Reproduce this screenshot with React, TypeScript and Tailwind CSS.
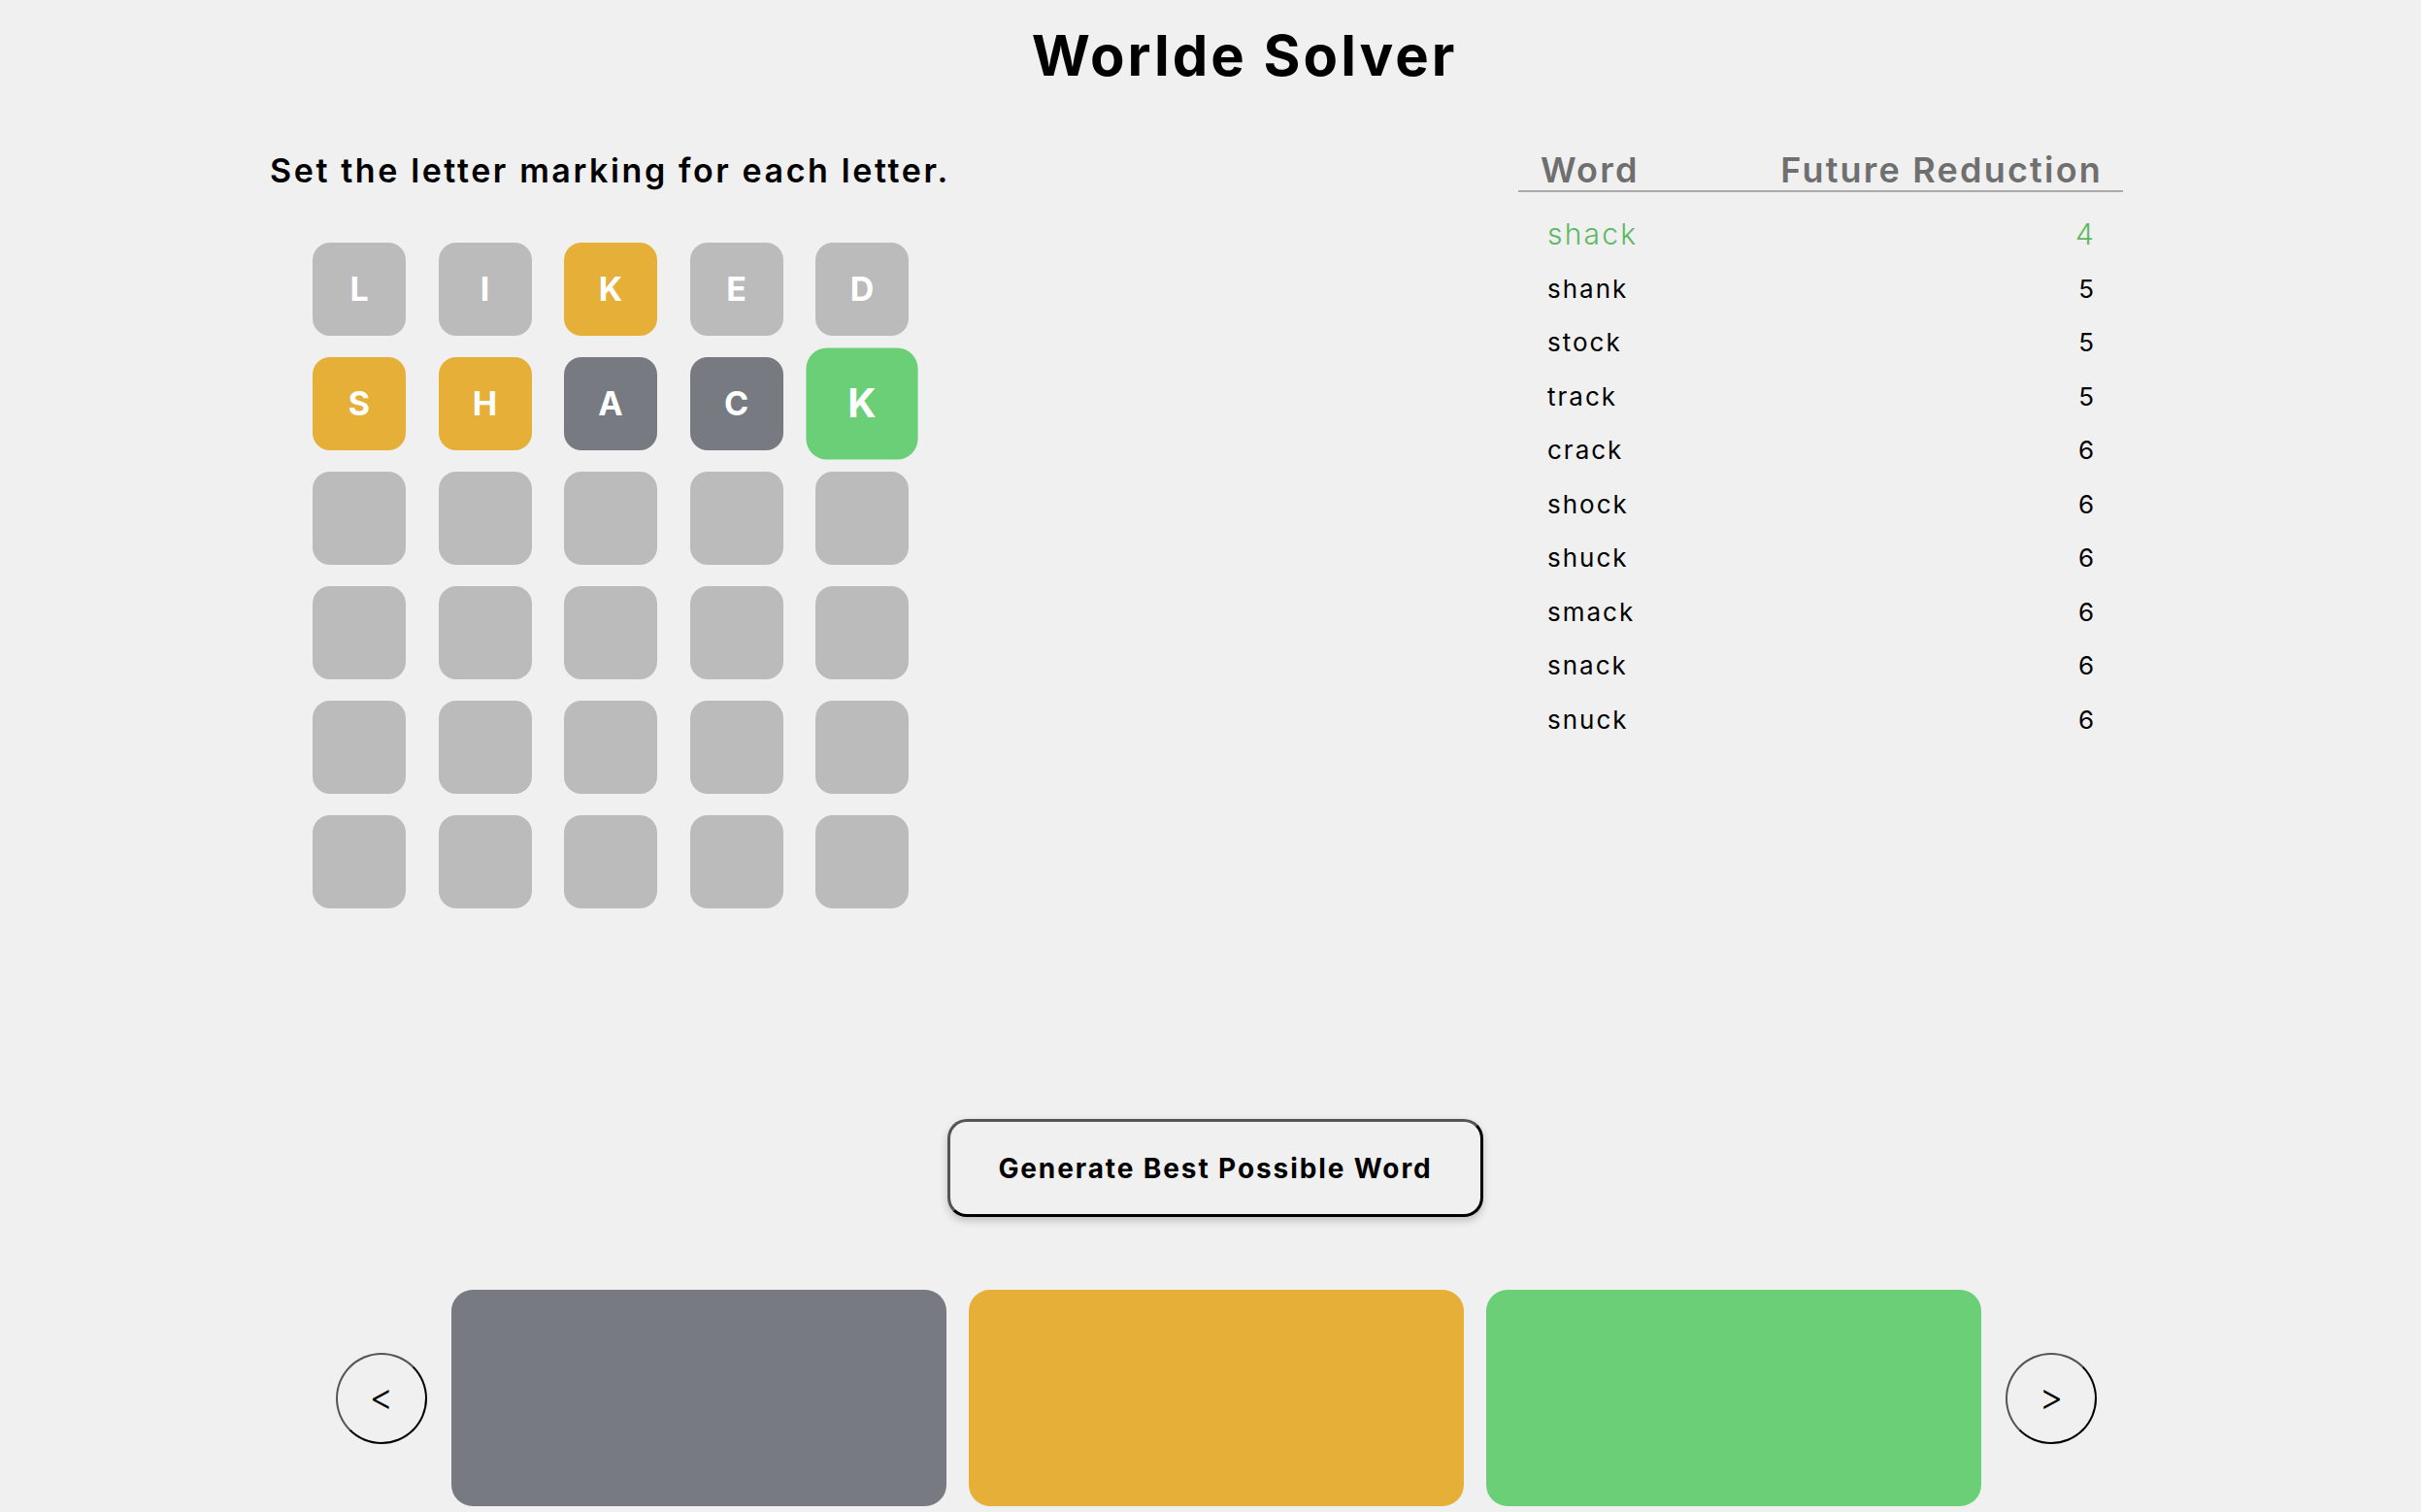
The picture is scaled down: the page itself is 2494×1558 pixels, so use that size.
type Mark = "none" | "absent" | "present" | "correct";

const rows: { letter: string; mark: Mark }[][] = [
  [
    { letter: "L", mark: "none" },
    { letter: "I", mark: "none" },
    { letter: "K", mark: "present" },
    { letter: "E", mark: "none" },
    { letter: "D", mark: "none" },
  ],
  [
    { letter: "S", mark: "present" },
    { letter: "H", mark: "present" },
    { letter: "A", mark: "absent" },
    { letter: "C", mark: "absent" },
    { letter: "K", mark: "correct" },
  ],
];

const emptyRows = 4;

const words: [string, number][] = [
  ["shack", 4],
  ["shank", 5],
  ["stock", 5],
  ["track", 5],
  ["crack", 6],
  ["shock", 6],
  ["shuck", 6],
  ["smack", 6],
  ["snack", 6],
  ["snuck", 6],
];

const markClass: Record<Mark, string> = {
  none: "bg-[#bbbbbb]",
  absent: "bg-[#787a81]",
  present: "bg-[#e6b038]",
  correct: "bg-[#6acf76] scale-[1.2]",
};

function Tile({ letter, mark }: { letter?: string; mark: Mark }) {
  return (
    <div
      className={`flex h-[96px] w-[96px] items-center justify-center rounded-[18px] text-[34px] font-bold leading-none text-white ${markClass[mark]}`}
    >
      {letter}
    </div>
  );
}

function ArrowButton({ label }: { label: string }) {
  return (
    <button className="flex h-[94px] w-[94px] items-center justify-center rounded-full border-2 border-black bg-transparent pb-[3px] text-[38px] font-light leading-none text-black [border-style:outset]">
      {label}
    </button>
  );
}

export default function App() {
  return (
    <div className="min-h-screen bg-[#f0f0f0] font-['Inter',sans-serif] text-black">
      <h1 className="pl-[70px] pt-[28px] text-center text-[58px] font-bold leading-none tracking-[3px]">
        Worlde Solver
      </h1>

      <div className="mt-[71px] flex items-start pl-[278px]">
        <div className="w-[1286px]">
          <p className="mt-[2px] text-[34px] font-semibold leading-none tracking-[2.6px]">
            Set the letter marking for each letter.
          </p>
          <div className="ml-[44px] mt-[57px] grid grid-cols-[repeat(5,96px)] gap-x-[33.5px] gap-y-[22px]">
            {rows.map((row, r) =>
              row.map((cell, c) => (
                <Tile key={`${r}-${c}`} letter={cell.letter} mark={cell.mark} />
              ))
            )}
            {Array.from({ length: emptyRows * 5 }).map((_, i) => (
              <Tile key={`empty-${i}`} mark="none" />
            ))}
          </div>
        </div>

        <div className="w-[623px]">
          <div className="flex justify-between border-b-2 border-[#aaaaaa] pb-[3px] pl-[23px] pr-[21px] text-[36px] font-semibold leading-none tracking-[2.2px] text-[#6f6f6f]">
            <span>Word</span>
            <span>Future Reduction</span>
          </div>
          <div className="mt-[16px]">
            {words.map(([word, score], i) => (
              <div
                key={word}
                className={`flex h-[55.5px] justify-between pl-[30px] pr-[28px] leading-[55.5px] ${
                  i === 0
                    ? "text-[30px] font-light tracking-[2.2px] text-[#5cb860]"
                    : "text-[26px] font-normal tracking-[2px] text-black"
                }`}
              >
                <span>{word}</span>
                <span>{score}</span>
              </div>
            ))}
          </div>
        </div>
      </div>

      <div className="mt-[217px] flex justify-center pl-[10px]">
        <button className="h-[101px] w-[552px] rounded-[20px] border-[3px] border-black bg-[#f0f0f0] text-[28px] font-bold tracking-[1.9px] text-black shadow-[0_4px_8px_rgba(0,0,0,0.2)] [border-style:outset]">
          Generate Best Possible Word
        </button>
      </div>

      <div className="mt-[75px] flex items-center justify-center gap-[25px] pl-[12px]">
        <ArrowButton label="<" />
        <div className="flex gap-[23px]">
          <div className="h-[223px] w-[510px] rounded-[22px] bg-[#787a81]" />
          <div className="h-[223px] w-[510px] rounded-[22px] bg-[#e6b038]" />
          <div className="h-[223px] w-[510px] rounded-[22px] bg-[#6acf76]" />
        </div>
        <ArrowButton label=">" />
      </div>
    </div>
  );
}
